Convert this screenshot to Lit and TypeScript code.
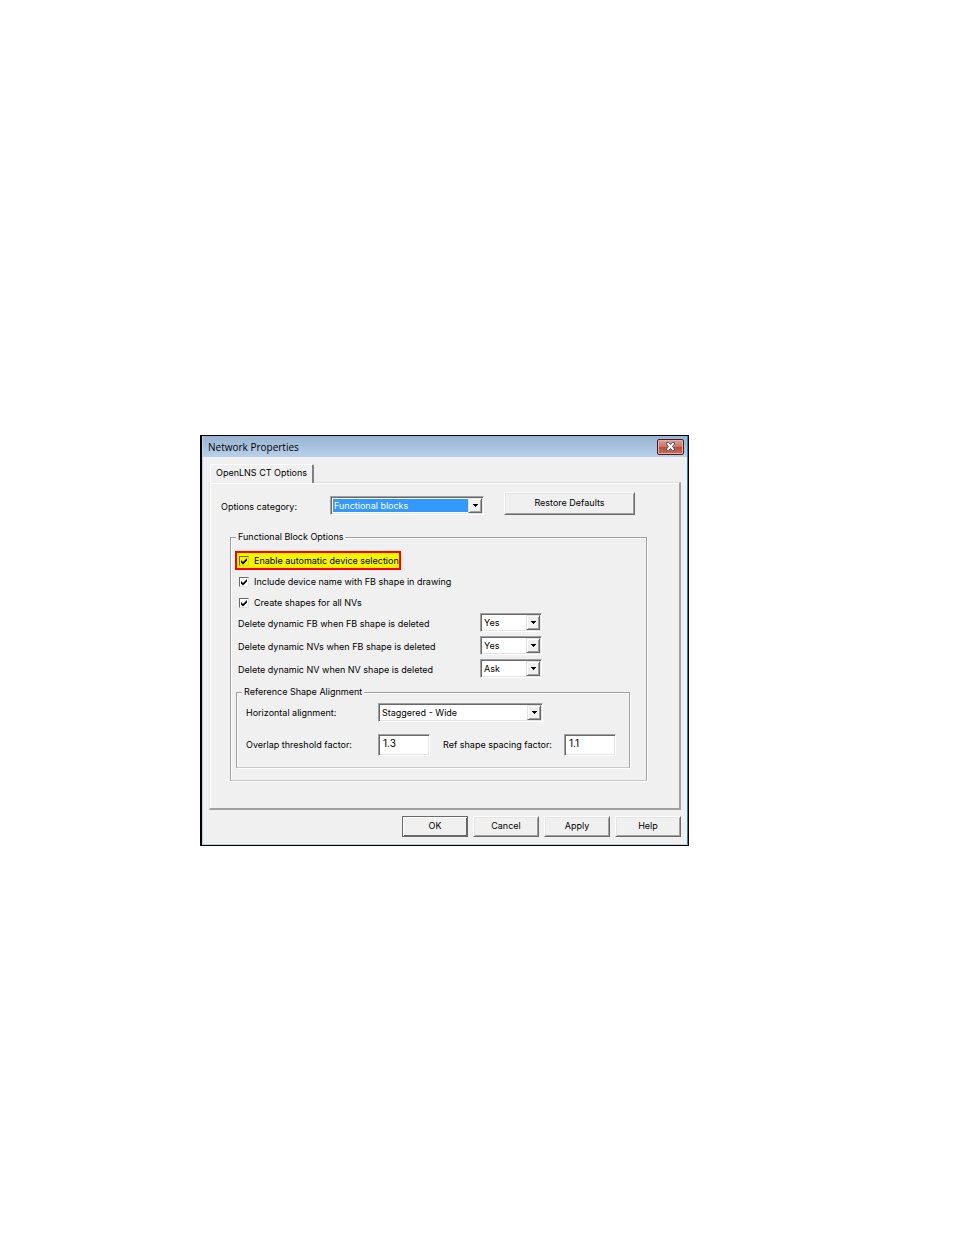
import { css, html, LitElement } from "lit";
import { customElement, property } from "lit/decorators.js";
import { classMap } from "lit/directives/class-map.js";

@customElement("combo-box")
export class ComboBox extends LitElement {
  @property() label = "";
  @property({ type: Array }) options: string[] = [];
  @property({ type: Boolean }) selected = false;

  static styles = css`
    :host {
      display: block;
    }

    .combo {
      position: relative;
      display: flex;
      box-sizing: border-box;
      height: 19px;
      padding: 1px;
      background: #fff;
      border: 1px solid;
      border-color: #a0a0a0 #fff #fff #a0a0a0;
      box-shadow: inset 1px 1px #696969, inset -1px -1px #e3e3e3;
    }

    .field {
      flex: 1;
      min-width: 0;
      margin: 1px;
      padding: 0 16px 0 1px;
      appearance: none;
      border: 0;
      border-radius: 0;
      outline: 0;
      background: #fff;
      color: #000;
      font: inherit;
      line-height: 13px;
    }

    .field.selected {
      background: #3399ff;
      color: #fff;
    }

    .arrow {
      position: absolute;
      top: 1px;
      right: 1px;
      bottom: 1px;
      display: flex;
      align-items: center;
      justify-content: center;
      width: 12px;
      background: #f0f0f0;
      border: 1px solid;
      border-color: #e3e3e3 #696969 #696969 #e3e3e3;
      box-shadow: inset 1px 1px #fff, inset -1px -1px #a0a0a0;
      pointer-events: none;
    }
  `;

  render() {
    return html`
      <div class="combo">
        <select
          class=${classMap({ field: true, selected: this.selected })}
          aria-label=${this.label}
        >
          ${this.options.map((option) => html`<option>${option}</option>`)}
        </select>
        <span class="arrow">
          <svg width="5" height="3" viewBox="0 0 5 3" shape-rendering="crispEdges">
            <path d="M0 0h5v1h-1v1h-1v1h-1v-1h-1v-1h-1z" />
          </svg>
        </span>
      </div>
    `;
  }
}

@customElement("app-root")
export class AppRoot extends LitElement {
  static styles = css`
    :host {
      display: block;
      min-height: 100vh;
      box-sizing: border-box;
      padding: 435px 265px 40px 200px;
      background: #fff;
      color: #000;
      font-family: Inter, "Liberation Sans", sans-serif;
      font-size: 9px;
      line-height: 12px;
    }

    .dialog {
      background: #f0f0f0;
      border: solid #000;
      border-width: 1px 1px 1px 2px;
    }

    .frame {
      border: solid;
      border-width: 0 1px 1px 1px;
      border-color: #b9d1ea #2a86a8 #b9d1ea #b9d1ea;
    }

    .titlebar {
      display: flex;
      align-items: center;
      justify-content: space-between;
      height: 21px;
      padding: 0 3px 0 5px;
      background: linear-gradient(#98b4d2, #b9d1ea);
    }

    .title {
      margin: 0;
      font: 10px/14px "Open Sans", sans-serif;
    }

    .close {
      display: flex;
      align-items: center;
      justify-content: center;
      width: 27px;
      height: 16px;
      padding: 0;
      border: 1px solid #4a1a20;
      border-radius: 2px;
      background: linear-gradient(#dba095 0, #cb7568 48%, #b84a38 50%, #c5705a);
      box-shadow: inset 0 0 0 1px #e3b0a6;
    }

    .body {
      padding: 7px 6px;
    }

    .tab {
      position: relative;
      display: block;
      height: 19px;
      margin: 0 0 -1px 1px;
      padding: 0 5px 2px;
      border: solid;
      border-width: 1px 2px 0 1px;
      border-color: #fff #808080 #fff #fff;
      border-radius: 2px 2px 0 0;
      background: #f0f0f0;
      color: inherit;
      font: inherit;
    }

    .panel {
      padding: 9px 32px 27px 20px;
      border: solid;
      border-width: 1px 2px 2px 1px;
      border-color: #dcdcdc #a0a0a0 #a0a0a0 #e3e3e3;
      box-shadow: inset 1px 1px #fff;
    }

    .category {
      display: flex;
      align-items: flex-end;
      height: 23px;
      margin: 0 0 16px -9px;
    }

    .category .text {
      width: 109px;
      padding-bottom: 2px;
    }

    .category combo-box {
      width: 154px;
      margin-right: 20px;
    }

    .push {
      box-sizing: border-box;
      width: 66px;
      height: 21px;
      padding: 0 0 1px;
      border: 1px solid;
      border-color: #fff #696969 #696969 #fff;
      border-radius: 0;
      background: #f0f0f0;
      box-shadow: inset 1px 1px #e3e3e3, inset -1px -1px #a0a0a0;
      color: inherit;
      font: inherit;
    }

    .push.wide {
      width: 131px;
      height: 23px;
    }

    .push.default {
      border-color: #696969;
      box-shadow: inset 1px 1px #fff, inset -1px -1px #696969;
    }

    .group {
      min-width: 0;
      margin: 0;
      padding: 8px 16px 12px 5px;
      border: 1px solid;
      border-color: #a0a0a0 #a0a0a0 #c8c8c8 #a0a0a0;
      box-shadow: 1px 1px #fff, inset 1px 1px #fff;
    }

    .group .group {
      margin-top: 8px;
      padding: 5px 8px 11px 9px;
    }

    .legend {
      padding: 0 2px;
      background: #f0f0f0;
    }

    .group .group .legend {
      margin-left: -4px;
    }

    .checks {
      display: flex;
      flex-direction: column;
      align-items: flex-start;
      gap: 2px;
      margin-bottom: 1px;
    }

    .check {
      display: flex;
      align-items: center;
      gap: 5px;
      box-sizing: border-box;
      height: 19px;
      margin-left: -1px;
      border: 2px solid transparent;
      padding-left: 2px;
    }

    .check.marked {
      border-color: #f00;
      background: #f5f500;
    }

    .tick {
      display: grid;
      width: 10px;
      height: 10px;
    }

    .tick > * {
      grid-area: 1 / 1;
    }

    .tick input {
      width: 10px;
      height: 10px;
      margin: 0;
      appearance: none;
      border: 1px solid;
      border-color: #696969 #e3e3e3 #e3e3e3 #696969;
      background: #fff;
    }

    .check.marked input {
      border-color: #696900 #dada00 #dada00 #696900;
      background: #f5f500;
    }

    .tick svg {
      display: none;
      z-index: 1;
      pointer-events: none;
    }

    .tick input:checked + svg {
      display: block;
    }

    .rows {
      display: grid;
      grid-template-columns: 242px 62px;
      gap: 4px 0;
      align-items: center;
      padding-left: 2px;
    }

    .rows .text {
      padding-top: 2px;
    }

    .align {
      display: grid;
      grid-template-columns: 132px 52px 13px 121px 52px;
      gap: 12px 0;
      align-items: center;
    }

    .align combo-box {
      grid-column: 2 / 6;
      width: 165px;
    }

    .align .second {
      grid-column: 4;
    }

    .number {
      box-sizing: border-box;
      width: 52px;
      height: 22px;
      padding: 0 4px 4px;
      border: 1px solid;
      border-color: #a0a0a0 #fff #fff #a0a0a0;
      border-radius: 0;
      background: #fff;
      box-shadow: inset 1px 1px #696969, inset -1px -1px #e3e3e3;
      color: inherit;
      font: inherit;
      font-size: 10px;
    }

    .actions {
      display: flex;
      justify-content: flex-end;
      gap: 5px;
      margin-top: 6px;
    }
  `;

  #checks = [
    { text: "Enable automatic device selection", marked: true },
    { text: "Include device name with FB shape in drawing", marked: false },
    { text: "Create shapes for all NVs", marked: false },
  ];

  #deletions = [
    { text: "Delete dynamic FB when FB shape is deleted", options: ["Yes", "No", "Ask"] },
    { text: "Delete dynamic NVs when FB shape is deleted", options: ["Yes", "No", "Ask"] },
    { text: "Delete dynamic NV when NV shape is deleted", options: ["Ask", "Yes", "No"] },
  ];

  get #titlebar() {
    return html`
      <header class="titlebar">
        <h1 class="title">Network Properties</h1>
        <button class="close" aria-label="Close">
          <svg width="11" height="9" viewBox="0 0 11 9">
            <path
              d="M1.500 .5h2l2 2 2-2h2v1.500L7.500 4.500 9.500 7v1.500h-2l-2-2-2 2h-2V7l2-2.500-2-2.500z"
              fill="#fff"
              stroke="#535666"
            />
          </svg>
        </button>
      </header>
    `;
  }

  get #blockOptions() {
    return html`
      <div class="checks">
        ${this.#checks.map(
          ({ text, marked }) => html`
            <label class=${classMap({ check: true, marked })}>
              <span class="tick">
                <input type="checkbox" checked />
                <svg width="10" height="10" viewBox="0 0 10 10">
                  <path d="M2 4v2.500L4 8.500l4-4V2L4 6z" />
                </svg>
              </span>
              ${text}
            </label>
          `
        )}
      </div>
      <div class="rows">
        ${this.#deletions.map(
          ({ text, options }) => html`
            <span class="text">${text}</span>
            <combo-box .label=${text} .options=${options}></combo-box>
          `
        )}
      </div>
    `;
  }

  get #alignment() {
    return html`
      <fieldset class="group">
        <legend class="legend">Reference Shape Alignment</legend>
        <div class="align">
          <span>Horizontal alignment:</span>
          <combo-box
            .label=${"Horizontal alignment"}
            .options=${["Staggered - Wide"]}
          ></combo-box>
          <label for="overlap">Overlap threshold factor:</label>
          <input class="number" id="overlap" value="1.3" />
          <label class="second" for="spacing">Ref shape spacing factor:</label>
          <input class="number" id="spacing" value="1.1" />
        </div>
      </fieldset>
    `;
  }

  render() {
    return html`
      <section class="dialog" role="dialog" aria-label="Network Properties">
        <div class="frame">
          ${this.#titlebar}
          <div class="body">
            <button class="tab" role="tab" aria-selected="true">OpenLNS CT Options</button>
            <div class="panel" role="tabpanel">
              <div class="category">
                <span class="text">Options category:</span>
                <combo-box
                  .label=${"Options category"}
                  .options=${["Functional blocks"]}
                  selected
                ></combo-box>
                <button class="push wide">Restore Defaults</button>
              </div>
              <fieldset class="group">
                <legend class="legend">Functional Block Options</legend>
                ${this.#blockOptions} ${this.#alignment}
              </fieldset>
            </div>
            <div class="actions">
              ${["OK", "Cancel", "Apply", "Help"].map(
                (name) => html`
                  <button class=${classMap({ push: true, default: name === "OK" })}>
                    ${name}
                  </button>
                `
              )}
            </div>
          </div>
        </div>
      </section>
    `;
  }
}
